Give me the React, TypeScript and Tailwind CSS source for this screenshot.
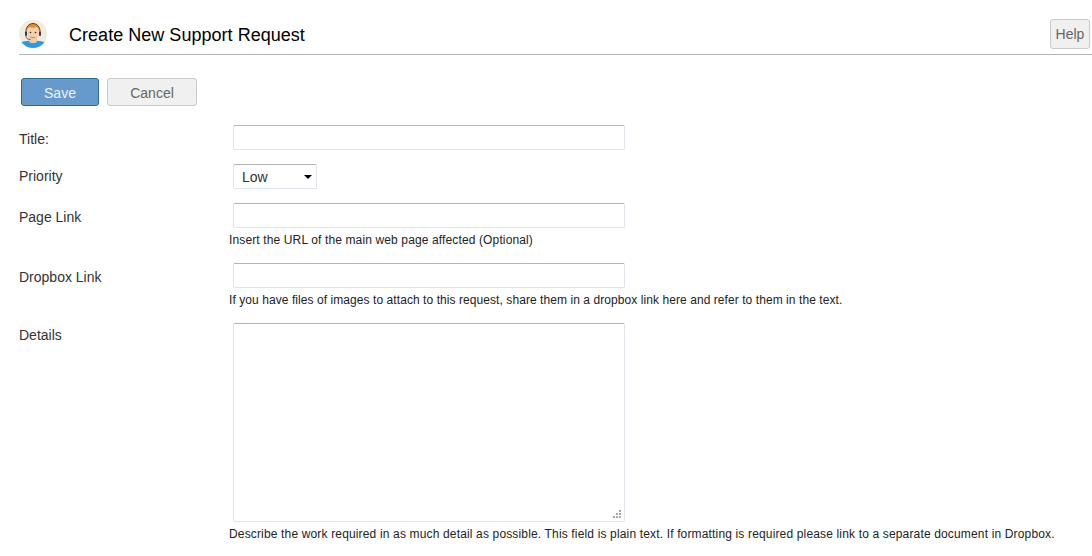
import { ReactNode } from 'react';

function Avatar() {
    return (
        <svg width="28" height="28" viewBox="0 0 28 28" className="shrink-0">
            <defs>
                <clipPath id="face-clip">
                    <circle cx="14" cy="14" r="14" />
                </clipPath>
            </defs>
            <circle cx="14" cy="14" r="14" fill="#f3ebe1" />
            <g clipPath="url(#face-clip)">
                <path d="M0 28v-5c3-1.500 8-2.500 14-2.500s11 1 14 2.500v5z" fill="#2a9be3" />
                <path d="M10 19h8v2.500c-1 2-7 2-8 0z" fill="#f2c9a5" />
                <ellipse cx="14" cy="13" rx="6" ry="7.500" fill="#f6cfae" />
                <path d="M7.500 12c-.5-6 3-8.500 6.500-8.500s7 2.500 6.500 8.500c-1-3-2-4.500-3-5-2 1-6 1-7.500.3-1 .7-2 2.200-2.500 4.700z" fill="#e2901f" />
                <path d="M7 13c-.6-6.500 3.500-9.500 7-9.500s7.600 3 7 9.500" fill="none" stroke="#4a4038" strokeWidth="1" />
                <rect x="6" y="11.500" width="2" height="4.500" rx="1" fill="#3a3a3a" />
                <rect x="20" y="11.500" width="2" height="4.500" rx="1" fill="#3a3a3a" />
                <path d="M7 16c0 2.500 2 3.500 4.500 3.500" fill="none" stroke="#3a3a3a" strokeWidth=".8" />
                <circle cx="11.500" cy="12.500" r=".8" fill="#3b2a20" />
                <circle cx="16.500" cy="12.500" r=".8" fill="#3b2a20" />
                <path d="M11.500 17c1.500 1 3.500 1 5 0" fill="none" stroke="#b5654a" strokeWidth=".8" />
            </g>
        </svg>
    );
}

function Row({
    label,
    labelClass,
    hint,
    hintClass,
    className,
    children,
}: {
    label: string;
    labelClass: string;
    hint?: string;
    hintClass?: string;
    className?: string;
    children: ReactNode;
}) {
    return (
        <div className={`flex ${className ?? ''}`}>
            <label className={`w-[214px] shrink-0 text-[14px] leading-5 text-[#333] ${labelClass}`}>{label}</label>
            <div>
                {children}
                {hint && <p className={`mt-[5px] -ml-1 text-[12px] leading-[14px] whitespace-nowrap text-[#222] ${hintClass ?? ''}`}>{hint}</p>}
            </div>
        </div>
    );
}

const inputClass = 'block w-[392px] h-[25px] bg-white border border-[#e0e3ea] border-t-[#b4b4b4] rounded-[2px]';

export default function App() {
    return (
        <div className="h-[556px] w-[1092px] overflow-hidden bg-white pl-[19px] font-['Liberation_Sans',Arial,sans-serif]">
            {/* Header */}
            <div className="flex h-[55px] items-center border-b border-[#b3b3b3] pt-[19px] pb-[5px]">
                <Avatar />
                <h1 className="mt-[1px] ml-[22px] text-[18px] leading-6 font-normal tracking-[0.03px] text-black">Create New Support Request</h1>
                <button className="mr-[2px] ml-auto h-[30px] w-[40px] rounded-[3px] border border-[#c9c9c9] bg-[#f0f0f0] text-[14px] text-[#666]">
                    Help
                </button>
            </div>

            {/* Actions */}
            <div className="mt-[23px] ml-[2px] flex gap-2">
                <button className="h-[28px] w-[78px] rounded-[3px] border border-[#2f6a94] bg-[#6699cc] pt-[2px] text-[14px] text-[#eef3f8]">
                    Save
                </button>
                <button className="h-[28px] w-[90px] rounded-[3px] border border-[#c9c9c9] bg-[#f0f0f0] pt-[2px] text-[14px] text-[#666]">
                    Cancel
                </button>
            </div>

            {/* Form */}
            <Row label="Title:" labelClass="pt-1" className="mt-[19px]">
                <input className={inputClass} />
            </Row>
            <Row label="Priority" labelClass="pt-[2px]" className="mt-[14px]">
                <div className="relative flex h-[25px] w-[84px] items-center rounded-[2px] border border-[#e0e3ea] border-t-[#b4b4b4] pt-[1px] pl-2 text-[14px] text-[#333]">
                    Low
                    <span className="absolute top-[10px] right-[4px] h-0 w-0 border-x-[4px] border-t-[4px] border-x-transparent border-t-black" />
                </div>
            </Row>
            <Row
                label="Page Link"
                labelClass="pt-1"
                hint="Insert the URL of the main web page affected (Optional)"
                hintClass="tracking-[0.13px]"
                className="mt-[14px]"
            >
                <input className={inputClass} />
            </Row>
            <Row
                label="Dropbox Link"
                labelClass="pt-1"
                hint="If you have files of images to attach to this request, share them in a dropbox link here and refer to them in the text."
                hintClass="tracking-[0.07px]"
                className="mt-[16px]"
            >
                <input className={inputClass} />
            </Row>
            <Row
                label="Details"
                labelClass="pt-[2px]"
                hint="Describe the work required in as much detail as possible. This field is plain text. If formatting is required please link to a separate document in Dropbox."
                hintClass="tracking-[0.155px]"
                className="mt-[16px]"
            >
                <div className="relative w-fit">
                    <textarea className="block h-[199px] w-[392px] resize-none rounded-[2px] border border-[#e0e3ea] border-t-[#b4b4b4] bg-white" />
                    {/* resize grip */}
                    <svg width="9" height="9" viewBox="0 0 9 9" className="absolute right-[3px] bottom-[3px]" fill="#a8a8a8">
                        <rect x="6" y="0" width="2" height="2" />
                        <rect x="3" y="3" width="2" height="2" />
                        <rect x="6" y="3" width="2" height="2" />
                        <rect x="0" y="6" width="2" height="2" />
                        <rect x="3" y="6" width="2" height="2" />
                        <rect x="6" y="6" width="2" height="2" />
                    </svg>
                </div>
            </Row>
        </div>
    );
}
